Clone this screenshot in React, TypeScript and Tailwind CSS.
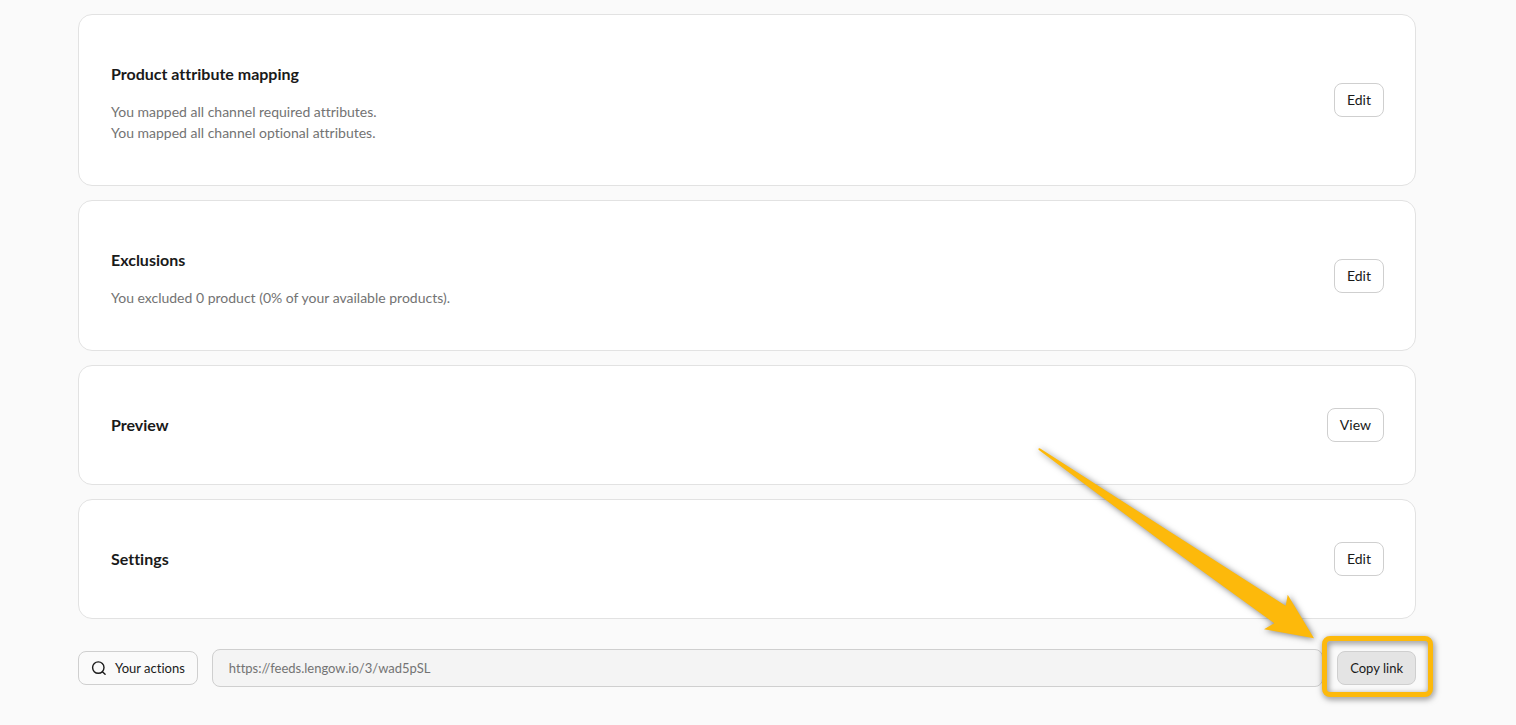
import { useState } from "react";
import type { ReactNode } from "react";

interface ISection {
  title: string;
  lines: string[];
  action: string;
}

const FEED_URL = "https://feeds.lengow.io/3/wad5pSL";

const sections: ISection[] = [
  {
    title: "Product attribute mapping",
    lines: [
      "You mapped all channel required attributes.",
      "You mapped all channel optional attributes.",
    ],
    action: "Edit",
  },
  {
    title: "Exclusions",
    lines: ["You excluded 0 product (0% of your available products)."],
    action: "Edit",
  },
  { title: "Preview", lines: [], action: "View" },
  { title: "Settings", lines: [], action: "Edit" },
];

function SearchIcon() {
  return (
    <svg
      className="h-4 w-4 shrink-0"
      viewBox="0 0 16 16"
      fill="none"
      stroke="currentColor"
      strokeWidth="1.4"
      strokeLinecap="round"
      aria-hidden="true"
    >
      <circle cx="7.3" cy="7.6" r="5.7" />
      <path d="M11.4 11.7l2.7 2.6" />
    </svg>
  );
}

function SectionCard({ title, lines, action }: ISection) {
  return (
    <section className="flex items-center justify-between rounded-[14px] border border-[#e2e2e2] bg-white py-10 pr-[31px] pl-8">
      <div>
        <h2 className="text-base leading-[38px] font-bold">{title}</h2>
        {lines.length > 0 && (
          <div className="mt-2 mb-0.5 text-sm leading-[21px] text-[#737373]">
            {lines.map((line) => (
              <p key={line}>{line}</p>
            ))}
          </div>
        )}
      </div>
      <button
        type="button"
        className="h-[34px] shrink-0 cursor-pointer rounded-lg border border-[#cfcfcf] bg-white px-3 text-sm hover:bg-gray-50"
      >
        {action}
      </button>
    </section>
  );
}

// yellow frame and arrow that point at the wrapped control
function Callout({ children }: { children: ReactNode }) {
  return (
    <div className="relative shrink-0">
      {children}
      <div className="pointer-events-none absolute -top-[15px] -right-[17px] -bottom-3 -left-[15px] rounded-lg border-5 border-[#fdb90b] drop-shadow-[1px_2px_3px_rgba(0,0,0,0.5)]" />
      <svg
        className="pointer-events-none absolute right-[86px] bottom-[35px] h-[210px] w-[300px] overflow-visible drop-shadow-[1px_1px_3px_rgba(0,0,0,0.5)]"
        viewBox="0 0 300 210"
        aria-hidden="true"
      >
        <path
          d="M8.5 8.6 L9.8 8.2 L140 91.8 L255.7 165.7 L257.7 154.7 L284 198.3 L234 189.3 L244.3 183.3 L140 107.8 L8.5 9.8 Z"
          fill="#fdb90b"
        />
      </svg>
    </div>
  );
}

export default function App() {
  const [copied, setCopied] = useState(false);

  async function copyLink() {
    try {
      await navigator.clipboard.writeText(FEED_URL);
      setCopied(true);
    } catch (error) {
      console.log(error);
    }
  }

  return (
    <main className="min-h-screen bg-[#fafafa] pt-3.5 pr-[100px] pb-[38px] pl-[78px] font-['Lato',sans-serif] text-[#1a1a1a] [font-variant-ligatures:none]">
      <div className="flex flex-col gap-3.5">
        {sections.map((section) => (
          <SectionCard key={section.title} {...section} />
        ))}
      </div>

      <div className="mt-[30px] flex items-center gap-3.5">
        <button
          type="button"
          className="flex h-[34px] shrink-0 cursor-pointer items-center gap-2 rounded-lg border border-[#cfcfcf] px-3 text-[13px] leading-5"
        >
          <SearchIcon />
          Your actions
        </button>
        <input
          type="text"
          readOnly
          aria-label="Feed link"
          value={FEED_URL}
          className="h-[38px] min-w-0 flex-1 rounded-lg border border-[#cfcfcf] bg-[#f4f4f4] px-4 text-[13px] text-[#737373] outline-none"
        />
        <Callout>
          <button
            type="button"
            onClick={copyLink}
            title={copied ? "Copied" : undefined}
            className="h-[34px] cursor-pointer rounded-lg border border-[#cfcfcf] bg-[#e4e4e4] px-3 text-[13px] leading-5"
          >
            Copy link
          </button>
        </Callout>
      </div>
    </main>
  );
}
